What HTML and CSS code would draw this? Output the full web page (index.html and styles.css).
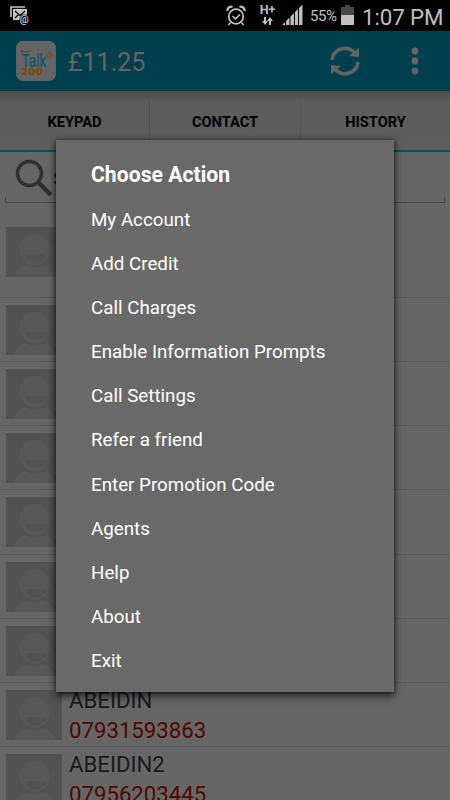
FILE: index.html
```
<!DOCTYPE html>
<html lang="en">
<head>
<meta charset="utf-8">
<title>Talk200</title>
<link rel="stylesheet" href="styles.css">
</head>
<body>
<div class="phone">
  <header class="status">
    <svg class="mail" width="22" height="21" viewBox="0 0 22 21"><path d="M2 12V2h14" fill="none" stroke="#c4c4c4" stroke-width="1.6"/><path d="M4 4h14v11H4z" fill="#c4c4c4"/><path d="M6 6l5 4.500L16 6M6 13l3.500-3.500M15 12l-2-2" fill="none" stroke="#000" stroke-width="1.300"/><circle cx="15.500" cy="14.500" r="5"/><text x="10.800" y="17.500" class="at">@</text></svg>
    <div class="indicators">
      <svg class="alarm" width="20" height="22" viewBox="0 0 20 22" fill="none" stroke="#c0c0c0"><circle cx="10" cy="11.500" r="7.300" stroke-width="1.700"/><path d="M1.500 6C1 3 4 1 6.500 2M18.500 6C19 3 16 1 13.500 2" stroke-width="2.200"/><path d="M6.500 11l3 2.800 4.500-4.300M4.500 17.500L2.500 20M15.500 17.500l2 2.500" stroke-width="1.700"/></svg>
      <div class="network"><span class="hplus">H+</span><svg width="11" height="8" viewBox="0 0 11 8" fill="#c0c0c0"><path d="M2 0h2v4h2L3 8 0 4h2zM7 8h2V4h2L8 0 5 4h2z"/></svg></div>
      <svg class="signal" width="21" height="21" viewBox="0 0 21 21" fill="#bdbdbd"><path d="M0 20l3-3v3zM4 16l3.500-3.500V20H4zM8.500 11.500L12 8v12H8.500zM13 7l3-3v16h-3zM17 3l3.500-3.500V20H17z"/></svg>
      <span class="percent">55%</span>
      <svg class="battery" width="13" height="20" viewBox="0 0 13 20"><path d="M4 0h5v2h4v8H0V2h4z" fill="#494949"/><path d="M0 10h13v10H0z" fill="#c0c0c0"/></svg>
      <span class="clock">1:07 PM</span>
    </div>
  </header>
  <div class="appbar">
    <svg class="logo" width="40" height="40" viewBox="0 0 40 40"><rect x=".5" y=".5" width="39" height="39" rx="6" fill="#646464" stroke="#5a6365"/><path d="M5 12V9l2-1v2h7v1.500H6" fill="#505050"/><text x="5.500" y="26" class="talk" textLength="25" lengthAdjust="spacingAndGlyphs">Talk</text><path d="M30 14.500q2.500 0 2.500 3M31 12.500q3.500 0 3.500 4.500M32 10.500q4 1 4 5" fill="none" stroke="#75430b" stroke-width=".8"/><text x="5" y="34" class="two" textLength="22" lengthAdjust="spacingAndGlyphs">200</text></svg>
    <span class="balance">£11.25</span>
    <svg class="refresh" width="30" height="30" viewBox="0 0 30 30"><g fill="none" stroke="#636363" stroke-width="3.600"><path d="M2 14C3 3 17-2 25 7"/><path d="M28 16C27 27 13 32 5 23"/></g><path d="M29 2v9l-10-1zM1 28v-9l10 1z" fill="#636363"/></svg>
    <svg class="more" width="8" height="28" viewBox="0 0 8 28" fill="#636363"><circle cx="4" cy="4" r="3.400"/><circle cx="4" cy="14" r="3.400"/><circle cx="4" cy="24" r="3.400"/></svg>
  </div>
  <nav class="tabs"><span>KEYPAD</span><span>CONTACT</span><span>HISTORY</span></nav>
  <div class="search">
    <svg width="38" height="38" viewBox="0 0 38 38" fill="none" stroke="#303030"><circle cx="14.500" cy="14.500" r="12" stroke-width="3.500"/><path d="M24 24l12 12" stroke-width="4.500"/></svg>
    <span>S</span>
  </div>
  <svg class="defs" width="0" height="0"><symbol id="person" viewBox="0 0 56 50"><path d="M0 0h56v50H0z" fill="#525252"/><circle cx="28.500" cy="22.500" r="15.500" fill="#575757"/><path d="M19 27h21c-1 11-20 11-21 0z" fill="#525252"/><path d="M8 50c2-8 8-12 14-11q6 3 13 0c7-1 12 4 14 11z" fill="#575757"/></symbol></svg>
  <main class="list">
    <div class="row first"><svg class="avatar"><use href="#person"/></svg></div>
    <div class="row"><svg class="avatar"><use href="#person"/></svg></div>
    <div class="row"><svg class="avatar"><use href="#person"/></svg></div>
    <div class="row"><svg class="avatar"><use href="#person"/></svg></div>
    <div class="row"><svg class="avatar"><use href="#person"/></svg></div>
    <div class="row"><svg class="avatar"><use href="#person"/></svg></div>
    <div class="row"><svg class="avatar"><use href="#person"/></svg></div>
    <div class="row"><svg class="avatar"><use href="#person"/></svg><div class="contact"><span>ABEIDIN</span><span class="number">07931593863</span></div></div>
    <div class="row"><svg class="avatar"><use href="#person"/></svg><div class="contact"><span>ABEIDIN2</span><span class="number">07956203445</span></div></div>
  </main>
  <section class="dialog">
    <h1>Choose Action</h1>
    <ul><li>My Account</li><li>Add Credit</li><li>Call Charges</li><li>Enable Information Prompts</li><li>Call Settings</li><li>Refer a friend</li><li>Enter Promotion Code</li><li>Agents</li><li>Help</li><li>About</li><li>Exit</li></ul>
  </section>
</div>
</body>
</html>
```
FILE: styles.css
```
* { box-sizing: border-box; }
body { margin: 0; background: #666; font-family: Roboto, sans-serif; }
svg { display: block; flex: none; }
.phone { position: relative; width: 450px; height: 800px; overflow: hidden; background: #666; }
.status { display: flex; justify-content: space-between; height: 31px; padding: 5px 7px 0 9px; background: #000; color: #c0c0c0; }
.at { font: bold 10px Roboto, sans-serif; fill: #c4c4c4; }
.indicators { display: flex; }
.network { display: flex; flex-direction: column; align-items: center; width: 17px; margin-left: 13px; }
.hplus { height: 12px; font-size: 12.500px; line-height: 9px; font-weight: 700; }
.signal { margin-left: 6px; }
.percent { width: 27px; margin-left: 7px; font-size: 15px; line-height: 22px; letter-spacing: -.4px; }
.battery { margin-left: 4px; }
.clock { width: 81px; margin-left: 8px; font-size: 22.300px; line-height: 24px; white-space: nowrap; letter-spacing: -.1px; }
.appbar { display: flex; align-items: center; height: 60px; padding: 0 31px 0 16px; background: #00404e; }
.talk { font: 18px Roboto, sans-serif; fill: #07566b; }
.two { font: bold 9.500px "DejaVu Sans", sans-serif; fill: #804806; }
.balance { flex: 1; margin: 2px 0 0 12px; font-size: 25px; color: #646464; }
.refresh { margin-right: 51px; }
.tabs { display: grid; grid-template-columns: 149px 151px 150px; height: 61px; padding-top: 10px; border-bottom: 2px solid #005068; background: linear-gradient(#4b4b4b, #5c5c5c 10px, #5e5e5e); color: #000; }
.tabs span { height: 42px; line-height: 43px; text-align: center; font-size: 14.600px; font-weight: 700; }
.tabs span + span { border-left: 1px solid #505050; }
.tabs span:last-child { border-color: #565656; }
.search { position: relative; display: flex; height: 51px; margin: 0 5px; padding: 7px 0 0 10px; color: #222; font-size: 19px; line-height: 40px; border-bottom: 1px solid #484848; }
.search::after { content: ""; position: absolute; inset: auto 0 0; height: 5px; border: solid #484848; border-width: 0 1px; }
.defs { position: absolute; }
.row { display: flex; height: 64.170px; padding: 7px 6px 0; border-bottom: 1px solid #5b5b5b; }
.first { height: 95px; padding-top: 24px; }
.avatar { width: 56px; height: 50px; }
.contact { display: flex; flex-direction: column; margin: -5px 0 0 7px; font-size: 22.200px; line-height: 30px; color: #1b1b1b; }
.number { color: #520600; }
.dialog { position: absolute; left: 56px; top: 140px; width: 338px; height: 552px; padding: 12px 35px; background: #696969; color: #fff; box-shadow: 0 4px 8px rgba(0,0,0,.65), 0 0 5px rgba(0,0,0,.5); }
h1 { margin: 0; font-size: 21.200px; line-height: 45.700px; font-weight: 700; }
ul { list-style: none; margin: 0; padding: 0; }
li { height: 44.170px; line-height: 44.170px; font-size: 18.750px; }
```
